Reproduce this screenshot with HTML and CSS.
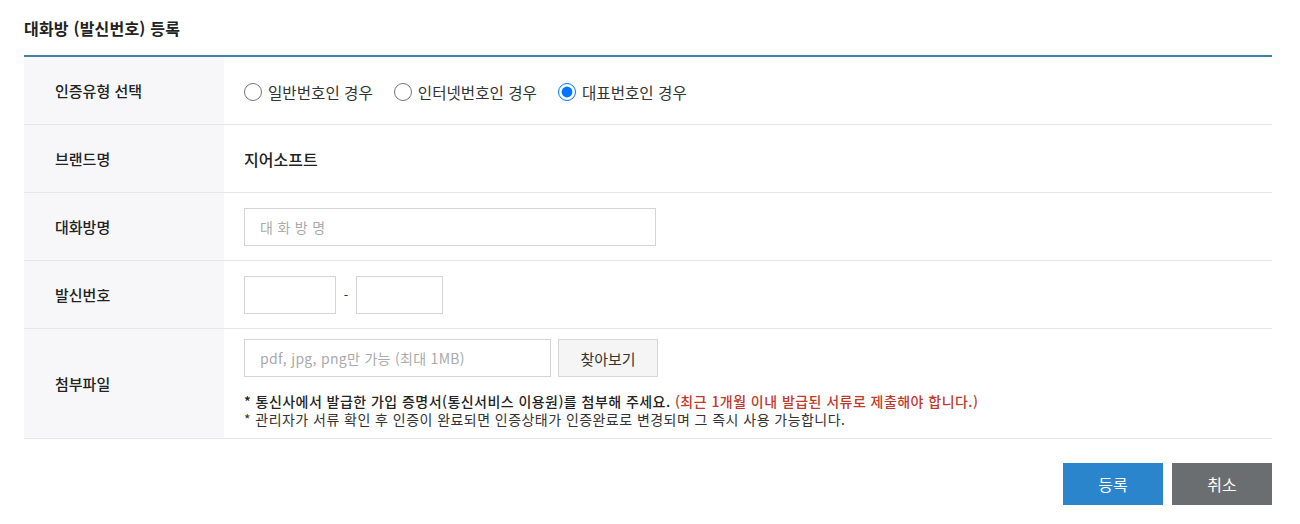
FILE: index.html
```html
<!DOCTYPE html>
<html lang="ko">
<head>
  <meta charset="UTF-8">
  <title>대화방 (발신번호) 등록</title>
  <link rel="stylesheet" href="styles.css">
</head>
<body>
  <div class="wrap">
    <h2 class="title">대화방 (발신번호) 등록</h2>

    <div class="form-table">
      <!-- 인증유형 -->
      <div class="row">
        <div class="label">인증유형 선택</div>
        <div class="field field-radio">
          <label class="radio"><input type="radio" name="type"> 일반번호인 경우</label>
          <label class="radio"><input type="radio" name="type"> 인터넷번호인 경우</label>
          <label class="radio"><input type="radio" name="type" checked> 대표번호인 경우</label>
        </div>
      </div>

      <div class="row">
        <div class="label">브랜드명</div>
        <div class="field"><span class="brand">지어소프트</span></div>
      </div>

      <div class="row">
        <div class="label">대화방명</div>
        <div class="field"><input type="text" class="input input-name" placeholder="대화방명"></div>
      </div>

      <div class="row">
        <div class="label">발신번호</div>
        <div class="field">
          <input type="text" class="input input-num1">
          <span class="dash">-</span>
          <input type="text" class="input input-num2">
        </div>
      </div>

      <!-- 첨부파일 -->
      <div class="row row-file">
        <div class="label">첨부파일</div>
        <div class="field field-col">
          <div class="file-line">
            <input type="text" class="input input-file" placeholder="pdf, jpg, png만 가능 (최대 1MB)" readonly>
            <button class="btn-find">찾아보기</button>
          </div>
          <p class="note note-strong">* 통신사에서 발급한 가입 증명서(통신서비스 이용원)를 첨부해 주세요. <span class="red">(최근 1개월 이내 발급된 서류로 제출해야 합니다.)</span></p>
          <p class="note">* 관리자가 서류 확인 후 인증이 완료되면 인증상태가 인증완료로 변경되며 그 즉시 사용 가능합니다.</p>
        </div>
      </div>
    </div>

    <div class="actions">
      <button class="btn btn-ok">등록</button>
      <button class="btn btn-cancel">취소</button>
    </div>
  </div>
</body>
</html>
```

FILE: styles.css
```css
body {
  margin: 0;
  padding: 0;
  background: #fff;
  font-family: "Noto Sans CJK KR", "Noto Sans", sans-serif;
  color: #222;
}
.wrap {
  padding: 0 28px 0 24px;
}
.title {
  margin: 0;
  height: 55px;
  line-height: 57px;
  font-size: 16px;
  font-weight: bold;
  letter-spacing: 0.2px;
  color: #222;
}
/* Form table */
.form-table {
  border-top: 2px solid #3f7fab;
}
.row {
  display: flex;
  height: 67px;
  border-bottom: 1px solid #e6e6e6;
}
.row-file {
  height: 109px;
}
.label {
  width: 169px;
  padding-left: 31px;
  background: #f7f7f9;
  display: flex;
  align-items: center;
  font-size: 15px;
  font-weight: 500;
  color: #222;
}
.field {
  flex: 1;
  display: flex;
  align-items: center;
  padding-left: 20px;
  font-size: 16px;
}
.field-radio {
  padding-top: 3px;
  font-size: 15.6px;
}
.field-col {
  flex-direction: column;
  align-items: flex-start;
  justify-content: flex-start;
  padding-top: 10px;
}
.radio {
  display: flex;
  align-items: center;
  margin-right: 21px;
  color: #333;
  cursor: pointer;
}
.radio input {
  width: 18px;
  height: 18px;
  margin: 0 6px 0 0;
}
.brand {
  font-weight: 500;
  color: #222;
}
.input {
  height: 38px;
  box-sizing: border-box;
  border: 1px solid #d4d4d4;
  padding: 0 15px;
  font-family: inherit;
  font-size: 14px;
  color: #333;
  outline: none;
}
.input::placeholder {
  color: #aaa;
}
.input-name {
  width: 412px;
  letter-spacing: 4.5px;
}
.input-num1 {
  width: 92px;
}
.input-num2 {
  width: 87px;
}
.dash {
  width: 20px;
  text-align: center;
  font-size: 13px;
  color: #333;
}
.file-line {
  display: flex;
  gap: 7px;
  margin-bottom: 15px;
}
.input-file {
  width: 307px;
  letter-spacing: 0.3px;
}
.btn-find {
  width: 100px;
  height: 38px;
  border: 1px solid #d8d8d8;
  background: #f5f5f5;
  font-family: inherit;
  font-size: 15px;
  color: #333;
}
.note {
  margin: 0;
  font-size: 14px;
  line-height: 18px;
  letter-spacing: 0.45px;
  color: #333;
}
.note-strong {
  font-weight: 500;
  color: #222;
}
.red {
  color: #c0392b;
}
/* Bottom buttons */
.actions {
  display: flex;
  justify-content: flex-end;
  gap: 9px;
  margin-top: 24px;
}
.btn {
  width: 100px;
  height: 42px;
  border: none;
  font-family: inherit;
  font-size: 16px;
  color: #fff;
  cursor: pointer;
}
.btn-ok {
  background: #2a85cd;
}
.btn-cancel {
  background: #6b6e71;
}
```
